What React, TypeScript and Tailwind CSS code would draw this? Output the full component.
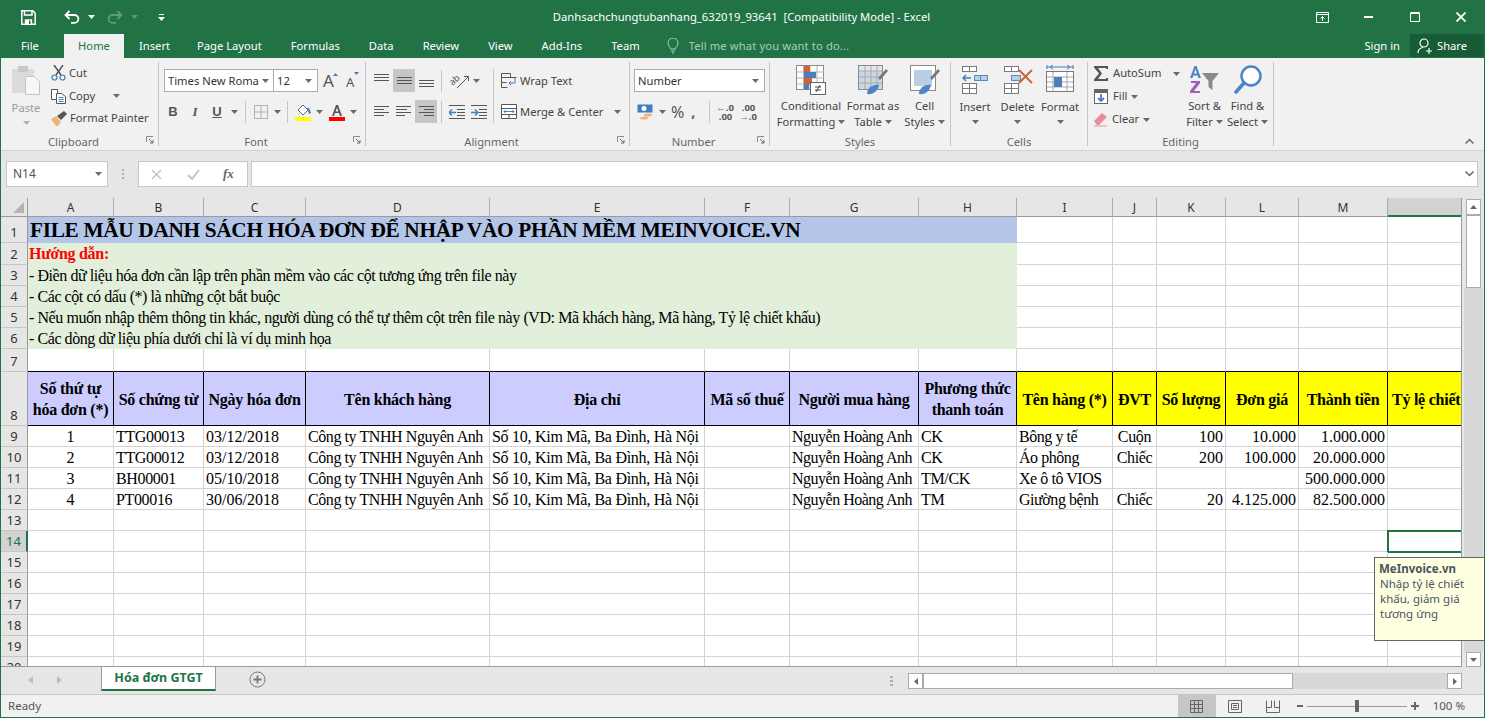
const serif = "font-['Liberation_Serif',serif]";

function Caret({ className = 'text-[#6b6b6b]' }: { className?: string }) {
  return (
    <svg width="7" height="4" viewBox="0 0 7 4" className={`shrink-0 ${className}`}>
      <path d="M0 0h7L3.5 4z" fill="currentColor" />
    </svg>
  );
}

function Launcher() {
  return (
    <svg width="8" height="8" viewBox="0 0 8 8" className="mr-[4px] mt-[6px] shrink-0" fill="none">
      <path d="M.5 6V.5H7" stroke="#8a8a8a" />
      <path d="M3 3l4 4M7 4v3H4" stroke="#6b6b6b" />
    </svg>
  );
}

function GroupLabel({ text, launcher = false }: { text: string; launcher?: boolean }) {
  return (
    <div className="flex h-[16px]">
      <div className="flex-1 text-center leading-[24px] text-[#666]">{text}</div>
      {launcher && <Launcher />}
    </div>
  );
}

function BigButton({ w, l1, l2, icon }: { w: string; l1: string; l2?: string; icon: React.ReactNode }) {
  return (
    <div className={`${w} flex flex-col items-center pt-[3px]`}>
      <div className="h-[32px] flex items-center justify-center">{icon}</div>
      <div className="mt-[3px] leading-[16px] h-[16px] whitespace-nowrap">{l1}</div>
      {l2 ? (
        <div className="leading-[16px] h-[16px] flex items-center gap-[3px] whitespace-nowrap">
          {l2}
          <Caret />
        </div>
      ) : (
        <div className="h-[16px] flex items-center">
          <Caret />
        </div>
      )}
    </div>
  );
}

function Lines({ rows }: { rows: [number, number][] }) {
  return (
    <svg width="15" height="15" viewBox="0 0 15 15" stroke="#555" fill="none">
      {rows.map(([y, w], i) => (
        <path key={i} d={`M${w < 0 ? 15 + w : 0} ${y + 0.5}h${Math.abs(w)}`} />
      ))}
    </svg>
  );
}

function Ribbon() {
  return (
    <div className="h-[93px] bg-[#f1f1f1] border-b border-[#d4d4d4] flex items-start pt-[4px] text-[11.2px] text-[#444] font-['Noto_Sans',sans-serif]">
      {/* Clipboard */}
      <div className="w-[158px] h-[84px] border-r border-[#c6c6c6] flex flex-col">
        <div className="h-[68px] flex">
          <div className="w-[50px] flex flex-col items-center pt-[3px]">
            <svg width="30" height="31" viewBox="0 0 30 31">
              <rect x="1" y="4" width="22" height="24" rx="1" fill="#dcdadb" />
              <rect x="7" y="1" width="10" height="6" fill="#c9c7c8" />
              <path d="M14.5 11.5h9l5 5v13h-14z" fill="#f7f7f7" stroke="#c4c4c4" />
            </svg>
            <div className="mt-[4px] leading-[16px] text-[#9a9a9a]">Paste</div>
            <div className="mt-[5px]"><Caret className="text-[#b0b0b0]" /></div>
          </div>
          <div className="flex flex-col">
            <div className="h-[23px] flex items-center gap-[3px]">
              <svg width="15" height="16" viewBox="0 0 15 16" fill="none" className="shrink-0">
                <path d="M3 0l7 10M12 0L5 10" stroke="#555" strokeWidth="1.5" />
                <circle cx="3.5" cy="12.5" r="2.5" stroke="#3f7fbf" strokeWidth="1.2" />
                <circle cx="11.5" cy="12.5" r="2.5" stroke="#3f7fbf" strokeWidth="1.2" />
              </svg>
              <span>Cut</span>
            </div>
            <div className="h-[23px] flex items-center gap-[3px]">
              <svg width="15" height="15" viewBox="0 0 15 15" fill="#fff" stroke="#555" className="shrink-0">
                <path d="M.5.5h6v10h-6z" />
                <path d="M5.5 4.5h5l4 3v7h-9z" />
                <path d="M7.5 8.5h5M7.5 10.5h5M7.5 12.5h5" stroke="#3f7fbf" />
              </svg>
              <span>Copy</span>
              <span className="ml-[15px]"><Caret /></span>
            </div>
            <div className="h-[23px] flex items-center gap-[3px]">
              <svg width="16" height="15" viewBox="0 0 16 15" className="shrink-0">
                <path d="M0 8l5-3 5 6-3 4H5z" fill="#e8b677" />
                <path d="M6 5l7-5 3 3-6 6z" fill="#555" />
              </svg>
              <span>Format Painter</span>
            </div>
          </div>
        </div>
        <GroupLabel text="Clipboard" launcher />
      </div>

      {/* Font */}
      <div className="w-[207px] h-[84px] border-r border-[#c6c6c6] flex flex-col">
        <div className="h-[68px] pt-[7px]">
          <div className="flex items-center h-[23px]">
            <div className="ml-[5px] w-[110px] h-[23px] bg-white border border-[#ababab] flex items-center pl-[3px] pr-[4px]">
              <span className="flex-1 truncate text-[#333] pt-[2px]">Times New Roma</span>
              <Caret />
            </div>
            <div className="w-[44px] h-[23px] bg-white border border-l-0 border-[#ababab] flex items-center pl-[3px] pr-[5px]">
              <span className="flex-1 text-[#333] pt-[2px]">12</span>
              <Caret />
            </div>
            <div className="ml-[5px] w-[16px] flex items-start">
              <span className="text-[17px] leading-[22px] text-[#555]">A</span>
              <svg width="5" height="3" viewBox="0 0 5 3" className="mt-[3px] -ml-[1px]"><path d="M0 3h5L2.5 0z" fill="#3f7fbf" /></svg>
            </div>
            <div className="ml-[7px] w-[14px] flex items-start">
              <span className="text-[13px] leading-[20px] text-[#555] mt-[3px]">A</span>
              <svg width="5" height="3" viewBox="0 0 5 3" className="mt-[3px]"><path d="M0 0h5L2.5 3z" fill="#3f7fbf" /></svg>
            </div>
          </div>
          <div className="flex items-center h-[23px] mt-[8px] ml-[3px] text-[13px] text-[#555]">
            <span className="w-[22px] text-center font-bold font-['Liberation_Sans',sans-serif]">B</span>
            <span className="w-[22px] text-center italic font-['Liberation_Serif',serif] font-bold">I</span>
            <span className="w-[22px] text-center underline font-bold font-['Liberation_Sans',sans-serif]">U</span>
            <span className="w-[12px] flex justify-center"><Caret /></span>
            <span className="ml-[5px] w-px h-[22px] bg-[#c6c6c6]" />
            <svg width="14" height="14" viewBox="0 0 14 14" className="ml-[8px]" fill="none" stroke="#777" strokeDasharray="1 1">
              <path d="M.5.5h13v13H.5zM.5 7h13M7 .5v13" />
            </svg>
            <span className="w-[19px] flex justify-center"><Caret /></span>
            <span className="w-px h-[22px] bg-[#c6c6c6]" />
            <svg width="16" height="18" viewBox="0 0 16 18" className="ml-[7px]">
              <path d="M3 7l5-5 5 5-5 5z" fill="#fff" stroke="#666" />
              <path d="M12 5h2l2 5-2 1z" fill="#3f7fbf" />
              <rect y="14" width="16" height="4" fill="#ffff00" />
            </svg>
            <span className="w-[16px] flex justify-center"><Caret /></span>
            <svg width="16" height="18" viewBox="0 0 16 18" className="ml-[2px]">
              <path d="M3 13L7 2h2l4 11h-2l-1-3H6l-1 3zM6.600 8.400h2.800L8 4.400z" fill="#555" />
              <rect y="14" width="16" height="4" fill="#ff0000" />
            </svg>
            <span className="w-[16px] flex justify-center"><Caret /></span>
          </div>
        </div>
        <GroupLabel text="Font" launcher />
      </div>

      {/* Alignment */}
      <div className="w-[264px] h-[84px] border-r border-[#c6c6c6] flex flex-col">
        <div className="h-[68px] pt-[7px] flex">
          <div className="w-[127px]">
            <div className="h-[23px] flex items-center pl-[8px]">
              <Lines rows={[[1, 15], [4, 15], [7, 15]]} />
              <span className="ml-[4px] w-[22px] h-[23px] bg-[#c6c6c6] flex items-center justify-center"><Lines rows={[[4, 15], [7, 15], [10, 15]]} /></span>
              <span className="ml-[4px] flex"><Lines rows={[[7, 15], [10, 15], [13, 15]]} /></span>
              <span className="ml-[7px] w-px h-[22px] bg-[#c6c6c6]" />
              <svg width="20" height="16" viewBox="0 0 20 16" className="ml-[8px]" fill="none">
                <text x="0" y="10" fontSize="9" fill="#555" stroke="none" transform="rotate(-42 5 8)">ab</text>
                <path d="M7 15L18 4M14 3.500h4.500V8" stroke="#555" />
              </svg>
              <span className="ml-[3px]"><Caret /></span>
            </div>
            <div className="h-[23px] mt-[8px] flex items-center pl-[8px]">
              <Lines rows={[[2, 15], [5, 10], [8, 15], [11, 10]]} />
              <span className="ml-[7px] flex"><Lines rows={[[2, 15], [11, 9], [5, 11], [8, 15]]} /></span>
              <span className="ml-[4px] w-[22px] h-[23px] bg-[#c6c6c6] flex items-center justify-center"><Lines rows={[[2, 15], [5, -10], [8, 15], [11, -10]]} /></span>
              <span className="ml-[4px] w-px h-[22px] bg-[#c6c6c6]" />
              <svg width="16" height="14" viewBox="0 0 16 14" className="ml-[7px]" fill="none">
                <path d="M0 .5h16M0 13.500h16M8 4.500h8M8 7.500h8M8 10.500h8" stroke="#555" />
                <path d="M0 7.500h7M3 4.500l-3 3 3 3" stroke="#3f7fbf" strokeWidth="1.400" />
              </svg>
              <svg width="16" height="14" viewBox="0 0 16 14" className="ml-[6px]" fill="none">
                <path d="M0 .5h16M0 13.500h16M8 4.500h8M8 7.500h8M8 10.500h8" stroke="#555" />
                <path d="M0 7.500h7M4 4.500l3 3-3 3" stroke="#3f7fbf" strokeWidth="1.400" />
              </svg>
            </div>
          </div>
          <span className="w-px h-[54px] bg-[#c6c6c6]" />
          <div className="pl-[7px]">
            <div className="h-[23px] flex items-center gap-[3px]">
              <svg width="16" height="15" viewBox="0 0 16 15" fill="none" stroke="#555">
                <path d="M.5.500h9v4h-9zM.5 4.500h15M.5 9.500h5M.5 14.500h6M.5 4.500v10" />
                <path d="M14 5v5H8M10 8l-2 2 2 2" stroke="#3f7fbf" />
              </svg>
              <span className="pt-[2px]">Wrap Text</span>
            </div>
            <div className="h-[23px] mt-[8px] flex items-center gap-[3px]">
              <svg width="16" height="15" viewBox="0 0 16 15" fill="#fff" stroke="#555">
                <path d="M.5.500h15v14H.5zM.5 4.500h15M.5 10.500h15M8 10.500v4" />
                <path d="M3 7.500h10M4.500 6L3 7.500 4.500 9M11.500 6L13 7.500 11.500 9" stroke="#3f7fbf" fill="none" />
              </svg>
              <span className="pt-[2px]">Merge &amp; Center</span>
              <span className="ml-[8px]"><Caret /></span>
            </div>
          </div>
        </div>
        <GroupLabel text="Alignment" launcher />
      </div>

      {/* Number */}
      <div className="w-[140px] h-[84px] border-r border-[#c6c6c6] flex flex-col">
        <div className="h-[68px] pt-[7px]">
          <div className="ml-[4px] w-[131px] h-[23px] bg-white border border-[#ababab] flex items-center pl-[3px] pr-[5px]">
            <span className="flex-1 text-[#333] pt-[2px]">Number</span>
            <Caret />
          </div>
          <div className="h-[23px] mt-[8px] flex items-center pl-[7px]">
            <svg width="16" height="16" viewBox="0 0 16 16">
              <rect x=".5" y=".5" width="15" height="8" fill="#3f7fbf" />
              <circle cx="7" cy="4.500" r="2.500" fill="#fff" />
              <ellipse cx="11" cy="11" rx="4" ry="1.500" fill="#e8b677" />
              <ellipse cx="7" cy="14" rx="4" ry="1.500" fill="#e8b677" />
            </svg>
            <span className="ml-[6px]"><Caret /></span>
            <span className="ml-[5px] text-[16px] leading-[20px] text-[#555]">%</span>
            <span className="ml-[7px] font-bold text-[#555] text-[14px] leading-[16px]">,</span>
            <span className="ml-[14px] w-px h-[22px] bg-[#c6c6c6]" />
            <div className="ml-[6px] w-[16px] text-[9.5px] leading-[9px] text-[#555] font-bold text-right">
              <div className="text-right"><span className="text-[#3f7fbf]">←</span>.0</div>
              <div>.00</div>
            </div>
            <div className="ml-[7px] w-[16px] text-[9.5px] leading-[9px] text-[#555] font-bold text-right">
              <div>.00</div>
              <div><span className="text-[#3f7fbf]">→</span>.0</div>
            </div>
          </div>
        </div>
        <GroupLabel text="Number" launcher />
      </div>

      {/* Styles */}
      <div className="w-[181px] h-[84px] border-r border-[#c6c6c6] flex flex-col">
        <div className="h-[68px] flex pl-[6px]">
          <BigButton
            w="w-[70px]"
            l1="Conditional"
            l2="Formatting"
            icon={
              <svg width="30" height="30" viewBox="0 0 30 30">
                <rect x=".5" y=".5" width="27" height="24" fill="#fff" stroke="#8a8a8a" />
                <path d="M7.500 1v24M14 1v24M21 1v24M1 7h27M1 13h27M1 19h27" stroke="#b5b5b5" />
                <rect x="8" y="1" width="6" height="6" fill="#d2603a" />
                <rect x="8" y="7" width="12" height="6" fill="#4a7fb8" />
                <rect x="8" y="13" width="8" height="6" fill="#d2603a" />
                <rect x="8" y="19" width="5" height="6" fill="#4a7fb8" />
                <rect x="14.500" y="17.500" width="15" height="12" fill="#fff" stroke="#666" />
                <path d="M19 22h6M19 25h6M24 20l-4 7" stroke="#444" fill="none" />
              </svg>
            }
          />
          <BigButton
            w="w-[54px]"
            l1="Format as"
            l2="Table"
            icon={
              <svg width="30" height="30" viewBox="0 0 30 30">
                <rect x=".5" y=".5" width="24" height="24" fill="#c9d6e6" stroke="#8a8a8a" />
                <rect x="1" y="1" width="23" height="5" fill="#e6e6e6" />
                <path d="M7 1v23M13 1v23M19 1v23M1 6h23M1 12h23M1 18h23" stroke="#a9a9a9" />
                <path d="M20 13l8-9 2 2-8 9z" fill="#777" />
                <path d="M9 29c0-6 6-10 12-9-1 6-6 10-12 9z" fill="#4a86c5" />
              </svg>
            }
          />
          <BigButton
            w="w-[49px]"
            l1="Cell"
            l2="Styles"
            icon={
              <svg width="30" height="30" viewBox="0 0 30 30">
                <rect x=".5" y=".5" width="25" height="25" fill="#fff" stroke="#8a8a8a" />
                <rect x="4" y="5" width="18" height="16" fill="#b9cfe6" />
                <path d="M20 13l8-9 2 2-8 9z" fill="#777" />
                <path d="M9 29c0-6 6-10 12-9-1 6-6 10-12 9z" fill="#4a86c5" />
              </svg>
            }
          />
        </div>
        <GroupLabel text="Styles" />
      </div>

      {/* Cells */}
      <div className="w-[137px] h-[84px] border-r border-[#c6c6c6] flex flex-col">
        <div className="h-[68px] flex pl-[3px]">
          <BigButton
            w="w-[42px]"
            l1="Insert"
            icon={
              <svg width="26" height="28" viewBox="0 0 26 28">
                <g stroke="#7a7a7a" fill="#fff">
                  <rect x=".5" y=".5" width="7" height="5" />
                  <rect x="7.500" y=".5" width="7" height="5" />
                  <rect x=".5" y="17.500" width="7" height="5" />
                  <rect x="7.500" y="17.500" width="7" height="5" />
                  <rect x=".5" y="22.500" width="7" height="5" />
                  <rect x="7.500" y="22.500" width="7" height="5" />
                  <rect x="12.500" y="9.500" width="6" height="5" fill="#b9cfe6" stroke="#5a8cc0" />
                  <rect x="18.500" y="9.500" width="7" height="5" fill="#b9cfe6" stroke="#5a8cc0" />
                </g>
                <path d="M1 12h8M4 9l-3 3 3 3" stroke="#3f7fbf" strokeWidth="1.500" fill="none" />
              </svg>
            }
          />
          <BigButton
            w="w-[43px]"
            l1="Delete"
            icon={
              <svg width="30" height="28" viewBox="0 0 30 28">
                <g stroke="#7a7a7a" fill="#fff">
                  <rect x="1.500" y=".5" width="7" height="5" />
                  <rect x="8.500" y=".5" width="7" height="5" />
                  <rect x="1.500" y="17.500" width="7" height="5" />
                  <rect x="8.500" y="17.500" width="7" height="5" />
                  <rect x="1.500" y="22.500" width="7" height="5" />
                  <rect x="8.500" y="22.500" width="7" height="5" />
                  <rect x="8.500" y="9.500" width="9" height="5" fill="#b9cfe6" stroke="#5a8cc0" />
                </g>
                <path d="M16 4l13 13M29 4L16 17" stroke="#d2603a" strokeWidth="2" />
              </svg>
            }
          />
          <BigButton
            w="w-[42px]"
            l1="Format"
            icon={
              <svg width="28" height="30" viewBox="0 0 28 30">
                <path d="M1 2h26M1 0v4M27 0v4M4 2l3-2M4 2l3 2M24 2l-3-2M24 2l-3 2" stroke="#3f7fbf" fill="none" />
                <rect x=".5" y="6.500" width="27" height="20" fill="#fff" stroke="#7a7a7a" />
                <path d="M7 7v19M21 7v19M1 12h26M1 17h26M1 22h26" stroke="#aaa" />
                <rect x="8" y="12" width="8" height="10" fill="#4a7fb8" />
              </svg>
            }
          />
        </div>
        <GroupLabel text="Cells" />
      </div>

      {/* Editing */}
      <div className="w-[186px] h-[84px] border-r border-[#c6c6c6] flex flex-col">
        <div className="h-[68px] flex">
          <div className="w-[95px] pl-[6px]">
            <div className="h-[23px] flex items-center gap-[4px]">
              <svg width="15" height="15" viewBox="0 0 15 15" className="shrink-0">
                <path d="M0 0h14v3h-2V2H4l4 5.500L4 13h8v-1h2v3H0v-1.500L5 7.500 0 1.500z" fill="#555" />
              </svg>
              <span>AutoSum</span>
              <span className="ml-[8px]"><Caret /></span>
            </div>
            <div className="h-[23px] flex items-center gap-[4px]">
              <svg width="15" height="15" viewBox="0 0 15 15" fill="none" className="shrink-0">
                <rect x=".5" y=".5" width="13" height="14" fill="#fff" stroke="#666" />
                <rect x="1" y="1" width="12" height="3" fill="#666" />
                <path d="M7 5v7M4 9l3 3 3-3" stroke="#3f7fbf" strokeWidth="1.800" />
              </svg>
              <span>Fill</span>
              <Caret />
            </div>
            <div className="h-[23px] flex items-center gap-[4px]">
              <svg width="14" height="14" viewBox="0 0 14 14" className="shrink-0">
                <path d="M0 8l8-8 5 4-8 8H3z" fill="#e98b9c" />
                <path d="M0 13h13" stroke="#e98b9c" />
              </svg>
              <span>Clear</span>
              <Caret />
            </div>
          </div>
          <BigButton
            w="w-[43px]"
            l1="Sort &"
            l2="Filter"
            icon={
              <svg width="30" height="30" viewBox="0 0 30 30">
                <path d="M0 13L4.500 1h2L11 13H8.500l-.8-2.500H3.300L2.500 13zM4 8.500h3L5.500 4z" fill="#4a86c5" />
                <path d="M1 16h9v2l-6 8h6v2H0v-2l6-8H1z" fill="#9a63b5" />
                <path d="M12 8h17l-6.500 8v9l-4-3v-6z" fill="#8a8a8a" />
              </svg>
            }
          />
          <BigButton
            w="w-[43px]"
            l1="Find &"
            l2="Select"
            icon={
              <svg width="28" height="30" viewBox="0 0 28 30" fill="none">
                <circle cx="17" cy="11" r="9.500" fill="#fff" stroke="#4a86c5" strokeWidth="2.500" />
                <path d="M2 27l8-9" stroke="#4a86c5" strokeWidth="3.500" strokeLinecap="round" />
              </svg>
            }
          />
        </div>
        <GroupLabel text="Editing" />
      </div>

      <div className="flex-1 h-[84px] flex items-end justify-end pr-[10px] pb-[2px]">
        <svg width="9" height="6" viewBox="0 0 9 6" fill="none" stroke="#666" strokeWidth="1.500">
          <path d="M.5 5.500L4.500 1.500l4 4" />
        </svg>
      </div>
    </div>
  );
}

function TitleBar() {
  return (
    <div className="h-[34px] bg-[#217346] flex items-center text-white text-[11.25px] font-['Noto_Sans',sans-serif]">
      <div className="flex-1 flex items-center pl-[20px]">
        <svg width="15" height="15" viewBox="0 0 15 15" fill="none" stroke="#fff" strokeWidth="1.500">
          <path d="M.8.800h11l2.400 2.400v11H.8z" />
          <path d="M3.500 1v4h7.500V1" />
          <rect x="3.800" y="9.300" width="7.400" height="5" fill="#fff" stroke="none" />
          <rect x="8" y="10.500" width="1.500" height="3.500" fill="#217346" stroke="none" />
        </svg>
        <svg width="16" height="14" viewBox="0 0 16 14" className="ml-[28px]" fill="none" stroke="#fff" strokeWidth="1.800">
          <path d="M5.500 1L1.500 5l4 4M1.500 5h9a3.800 3.800 0 0 1 0 7.800H7" />
        </svg>
        <span className="ml-[8px]"><Caret className="text-white" /></span>
        <svg width="16" height="14" viewBox="0 0 16 14" className="ml-[12px]" fill="none" stroke="#5f9a7c" strokeWidth="1.800">
          <path d="M10.500 1l4 4-4 4M14.500 5h-9a3.800 3.800 0 0 0 0 7.800H9" />
        </svg>
        <span className="ml-[8px]"><Caret className="text-[#5f9a7c]" /></span>
        <svg width="7" height="7" viewBox="0 0 7 7" className="ml-[20px]" fill="#fff">
          <rect x="1" width="5" height="1" />
          <path d="M0 3h7L3.500 7z" />
        </svg>
      </div>
      <div className="whitespace-pre mr-[22px]">Danhsachchungtubanhang_632019_93641  [Compatibility Mode] - Excel</div>
      <div className="flex-1 flex items-center justify-end">
        <svg width="13" height="11" viewBox="0 0 13 11" fill="none" stroke="#fff">
          <path d="M.5.500h12v10H.5zM.5 2.500h12M6.500 9V4.500M4.500 6.500l2-2 2 2" />
        </svg>
        <svg width="9" height="2" viewBox="0 0 9 2" className="ml-[35px]"><rect width="9" height="2" fill="#fff" /></svg>
        <svg width="10" height="10" viewBox="0 0 10 10" className="ml-[37px]" fill="none" stroke="#fff">
          <path d="M.5 1.200h9v8.300h-9z" />
          <path d="M.5 1h9" strokeWidth="2" />
        </svg>
        <svg width="10" height="10" viewBox="0 0 10 10" className="ml-[36px] mr-[18px]" fill="none" stroke="#fff" strokeWidth="1.800">
          <path d="M.5.500l9 9M9.500.500l-9 9" />
        </svg>
      </div>
    </div>
  );
}

function TabRow() {
  return (
    <div className="h-[24px] bg-[#217346] flex text-white text-[11.2px] font-['Noto_Sans',sans-serif] leading-[24px]">
      <span className="ml-[20px] w-[43px]">File</span>
      <span className="w-[60px] bg-[#f1f1f1] text-[#217346] text-center">Home</span>
      <div className="ml-[15px] flex gap-[29px]">
        <span className="-mr-[2px]">Insert</span>
        <span>Page Layout</span>
        <span>Formulas</span>
        <span>Data</span>
        <span>Review</span>
        <span>View</span>
        <span>Add-Ins</span>
        <span>Team</span>
      </div>
      <svg width="12" height="16" viewBox="0 0 12 16" className="ml-[27px] mt-[4px]" fill="none" stroke="#a9cdb9">
        <path d="M3.500 11c0-2-2.500-3-2.500-6a5 5 0 0 1 10 0c0 3-2.500 4-2.500 6zM4 13h4M5 15h2" />
      </svg>
      <span className="ml-[10px] text-[#a9cdb9] tracking-[0.13px]">Tell me what you want to do...</span>
      <div className="flex-1" />
      <span className="mr-[10px]">Sign in</span>
      <div className="w-[74px] h-[23px] bg-[#185c37] flex items-center pl-[7px] gap-[4px]">
        <svg width="16" height="16" viewBox="0 0 16 16" fill="none" stroke="#fff" strokeWidth="1.200">
          <circle cx="7" cy="5" r="4" />
          <path d="M1 15c0-3 2-5 5-5.500M12 10v6M9 13h6" />
        </svg>
        <span>Share</span>
      </div>
    </div>
  );
}

function FormulaBar() {
  return (
    <div className="h-[47px] bg-[#e6e6e6] flex items-start pt-[10px] font-['Noto_Sans',sans-serif] text-[12px]">
      <div className="ml-[5px] w-[102px] h-[26px] bg-white border border-[#c6c6c6] flex items-center pl-[6px] pr-[5px] text-[#555]">
        <span className="flex-1">N14</span>
        <Caret />
      </div>
      <svg width="3" height="11" viewBox="0 0 3 11" className="ml-[14px] mt-[8px]" fill="#b0b0b0">
        <rect width="2" height="2" /><rect y="4" width="2" height="2" /><rect y="8" width="2" height="2" />
      </svg>
      <div className="ml-[13px] w-[110px] h-[26px] bg-white border border-[#c6c6c6] flex items-center pl-[12px]">
        <svg width="11" height="11" viewBox="0 0 11 11" stroke="#c4c4c4" strokeWidth="1.500"><path d="M1 1l9 9M10 1l-9 9" /></svg>
        <svg width="13" height="11" viewBox="0 0 13 11" className="ml-[25px]" fill="none" stroke="#c4c4c4" strokeWidth="2"><path d="M1 6l4 4 7-9" /></svg>
        <span className="ml-[23px] font-['Liberation_Serif',serif] italic font-bold text-[#666] text-[13px]">fx</span>
      </div>
      <div className="ml-[3px] w-[1227px] h-[26px] bg-white border border-[#c6c6c6] flex items-center justify-end pr-[3px]">
        <svg width="9" height="6" viewBox="0 0 9 6" fill="none" stroke="#666" strokeWidth="1.500"><path d="M.5.500l4 4 4-4" /></svg>
      </div>
    </div>
  );
}

const columns = ['A', 'B', 'C', 'D', 'E', 'F', 'G', 'H', 'I', 'J', 'K', 'L', 'M', ''];
const headers = [
  'Số thứ tự\nhóa đơn (*)', 'Số chứng từ', 'Ngày hóa đơn', 'Tên khách hàng', 'Địa chỉ', 'Mã số thuế',
  'Người mua hàng', 'Phương thức\nthanh toán', 'Tên hàng (*)', 'ĐVT', 'Số lượng', 'Đơn giá', 'Thành tiền',
  'Tỷ lệ chiết khấu (%)',
];
const aligns = [
  'text-center', 'text-left tracking-[-0.35px]', 'text-left', 'text-left tracking-[-0.42px]', 'text-left tracking-[-0.28px]', 'text-left',
  'text-left tracking-[-0.5px]', 'text-left tracking-[-0.35px]', 'text-left tracking-[-0.45px]', 'text-center tracking-[-0.35px]',
  'text-right', 'text-right', 'text-right', 'text-right',
];
const customer = 'Công ty TNHH Nguyên Anh';
const address = 'Số 10, Kim Mã, Ba Đình, Hà Nội';
const buyer = 'Nguyễn Hoàng Anh';
const dataRows = [
  ['1', 'TTG00013', '03/12/2018', customer, address, '', buyer, 'CK', 'Bông y tế', 'Cuộn', '100', '10.000', '1.000.000', ''],
  ['2', 'TTG00012', '03/12/2018', customer, address, '', buyer, 'CK', 'Áo phông', 'Chiếc', '200', '100.000', '20.000.000', ''],
  ['3', 'BH00001', '05/10/2018', customer, address, '', buyer, 'TM/CK', 'Xe ô tô VIOS', '', '', '', '500.000.000', ''],
  ['4', 'PT00016', '30/06/2018', customer, address, '', buyer, 'TM', 'Giường bệnh', 'Chiếc', '20', '4.125.000', '82.500.000', ''],
];
const instructions = [
  '- Điền dữ liệu hóa đơn cần lập trên phần mềm vào các cột tương ứng trên file này',
  '- Các cột có dấu (*) là những cột bắt buộc',
  '- Nếu muốn nhập thêm thông tin khác, người dùng có thể tự thêm cột trên file này (VD: Mã khách hàng, Mã hàng, Tỷ lệ chiết khấu)',
  '- Các dòng dữ liệu phía dưới chỉ là ví dụ minh họa',
];

const gridCell = 'border-r border-b border-[#d4d4d4] overflow-hidden whitespace-nowrap px-[2px] pt-[1px] leading-[20px]';

function RowHead({ n, active = false }: { n: number; active?: boolean }) {
  return (
    <div
      className={`flex items-end justify-center font-['Noto_Sans',sans-serif] text-[13px] leading-[20px] border-b border-[#c6c6c6] ${
        active ? 'bg-[#d2d2d2] text-[#217346] border-r-2 border-r-[#217346]' : 'bg-[#e6e6e6] text-[#333] border-r border-r-[#9b9b9b]'
      }`}
    >
      {n}
    </div>
  );
}

function BlankTail({ row, from }: { row: number; from: number }) {
  return (
    <>
      {columns.slice(from).map((c, i) => (
        <div key={`${row}-${c}-${i}`} className={gridCell} />
      ))}
    </>
  );
}

function Sheet() {
  const emptyRows = [13, 14, 15, 16, 17, 18, 19, 20];
  return (
    <div className="h-[469px] flex bg-[#e6e6e6]">
      <div className="w-[1461px] border-b border-r border-[#9b9b9b] overflow-hidden bg-white">
        <div className={`grid grid-cols-[27px_86px_90px_102px_184px_215px_85px_129px_98px_96px_44px_69px_73px_89px_160px] grid-rows-[19px_26px_22px_21px_21px_21px_21px_23px_54px_repeat(12,21px)] w-max text-[16px] text-black ${serif}`}>
          {/* column letters */}
          <div className="bg-[#e6e6e6] border-r border-b border-[#9b9b9b] flex items-end justify-end pr-[3px] pb-[3px]">
            <svg width="11" height="11" viewBox="0 0 11 11"><path d="M11 0v11H0z" fill="#b4b4b4" /></svg>
          </div>
          {columns.map((c, i) =>
            c ? (
              <div key={i} className="bg-[#e6e6e6] border-r border-b border-r-[#ababab] border-b-[#9b9b9b] flex items-start pt-[1px] justify-center font-['Noto_Sans',sans-serif] text-[12px] leading-[18px] text-[#333]">
                {c}
              </div>
            ) : (
              <div key={i} className="bg-[#d2d2d2] border-b-2 border-[#217346]" />
            ),
          )}

          {/* rows 1 to 6 */}
          <RowHead n={1} />
          <div className="col-span-8 bg-[#b4c6e7] font-bold text-[21.3px] tracking-[-0.32px] leading-[27px] pl-[2px] whitespace-nowrap">
            FILE MẪU DANH SÁCH HÓA ĐƠN ĐỂ NHẬP VÀO PHẦN MỀM MEINVOICE.VN
          </div>
          <BlankTail row={1} from={8} />
          <RowHead n={2} />
          <div className="col-span-8 bg-[#e2efda] font-bold text-[#ff0000] px-[1px] leading-[22px] tracking-[-0.3px]">Hướng dẫn:</div>
          <BlankTail row={2} from={8} />
          {instructions.map((t, i) => (
            <div key={i} className="contents">
              <RowHead n={i + 3} />
              <div className="col-span-8 bg-[#e2efda] px-[1px] leading-[21px] whitespace-nowrap tracking-[-0.43px]">{t}</div>
              <BlankTail row={i + 3} from={8} />
            </div>
          ))}

          {/* row 7 */}
          <RowHead n={7} />
          {columns.map((c, i) => (
            <div key={i} className="border-r border-[#d4d4d4] border-b border-b-black" />
          ))}

          {/* header row */}
          <RowHead n={8} />
          {headers.map((h, i) => (
            <div
              key={i}
              className={`border-r border-b border-black flex items-center pt-[1px] font-bold leading-[21px] tracking-[-0.25px] whitespace-pre text-center overflow-hidden ${
                i < 8 ? 'bg-[#ccccff]' : 'bg-[#ffff00]'
              } ${i === 13 ? 'justify-start pl-[4px]' : 'justify-center'}`}
            >
              {h}
            </div>
          ))}

          {/* data */}
          {dataRows.map((row, r) => (
            <div key={r} className="contents">
              <RowHead n={r + 9} />
              {row.map((v, i) => (
                <div key={i} className={`${gridCell} ${aligns[i]}`}>
                  {v}
                </div>
              ))}
            </div>
          ))}

          {/* empty rows */}
          {emptyRows.map((n) => (
            <div key={n} className="contents">
              <RowHead n={n} active={n === 14} />
              {columns.map((c, i) => (
                <div
                  key={i}
                  className={n === 14 && i === 13 ? 'outline-2 -outline-offset-1 outline-[#217346]' : gridCell}
                />
              ))}
            </div>
          ))}
        </div>
      </div>

      {/* vertical scrollbar */}
      <div className="w-[22px] flex flex-col items-center">
        <div className="h-[16px] w-[15px] mt-[1px] bg-white border border-[#ababab] flex items-center justify-center">
          <svg width="7" height="4" viewBox="0 0 7 4"><path d="M0 4h7L3.500 0z" fill="#666" /></svg>
        </div>
        <div className="h-[73px] w-[15px] bg-white border border-[#ababab]" />
        <div className="flex-1 w-[19px] bg-[#d8d8d8]" />
        <div className="h-[15px] w-[15px] bg-white border border-[#ababab] flex items-center justify-center">
          <svg width="7" height="4" viewBox="0 0 7 4"><path d="M0 0h7L3.500 4z" fill="#666" /></svg>
        </div>
      </div>
    </div>
  );
}

function SheetTabs() {
  return (
    <div className="h-[28px] bg-[#e6e6e6] border-b border-[#c6c6c6] flex items-start font-['Noto_Sans',sans-serif]">
      <svg width="5" height="8" viewBox="0 0 5 8" className="ml-[27px] mt-[9px]"><path d="M5 0v8L0 4z" fill="#bdbdbd" /></svg>
      <svg width="5" height="8" viewBox="0 0 5 8" className="ml-[24px] mt-[9px]"><path d="M0 0v8l5-4z" fill="#bdbdbd" /></svg>
      <div className="ml-[39px] w-[115px] h-[24px] bg-white border-x border-[#9b9b9b] border-b-2 border-b-[#217346] flex items-center justify-center font-bold text-[12.5px] text-[#217346]">
        Hóa đơn GTGT
      </div>
      <svg width="17" height="17" viewBox="0 0 17 17" className="ml-[33px] mt-[4px]" fill="none" stroke="#777">
        <circle cx="8.500" cy="8.500" r="7.500" />
        <path d="M8.500 4.500v8M4.500 8.500h8" strokeWidth="1.800" />
      </svg>
      <svg width="3" height="11" viewBox="0 0 3 11" className="ml-[624px] mt-[9px]" fill="#b0b0b0">
        <rect width="3" height="2" /><rect y="4" width="3" height="2" /><rect y="8" width="3" height="2" />
      </svg>
      <div className="ml-[15px] mt-[6px] w-[554px] h-[16px] flex bg-[#d8d8d8]">
        <div className="w-[15px] bg-white border border-[#ababab] flex items-center justify-center">
          <svg width="4" height="7" viewBox="0 0 4 7"><path d="M4 0v7L0 3.500z" fill="#666" /></svg>
        </div>
        <div className="w-[370px] bg-white border border-[#ababab]" />
        <div className="flex-1" />
        <div className="w-[15px] bg-white border border-[#ababab] flex items-center justify-center">
          <svg width="4" height="7" viewBox="0 0 4 7"><path d="M0 0v7l4-3.500z" fill="#666" /></svg>
        </div>
      </div>
    </div>
  );
}

function StatusBar() {
  return (
    <div className="h-[22px] bg-[#f1f1f1] flex items-center font-['Noto_Sans',sans-serif] text-[11.5px] text-[#555]">
      <span className="ml-[7px]">Ready</span>
      <div className="flex-1" />
      <div className="w-[38px] h-[22px] bg-[#c6c6c6] flex items-center justify-center">
        <svg width="13" height="13" viewBox="0 0 13 13" fill="none" stroke="#666">
          <path d="M.5.500h12v12H.5zM4.500.5v12M8.500.5v12M.5 4.500h12M.5 8.500h12" />
        </svg>
      </div>
      <svg width="14" height="13" viewBox="0 0 14 13" fill="none" stroke="#666" className="ml-[12px]">
        <path d="M.5.500h13v12H.5z" />
        <path d="M3.500 3.500h7v6h-7zM5 5.500h4M5 7.500h4" />
      </svg>
      <svg width="14" height="13" viewBox="0 0 14 13" fill="none" stroke="#666" className="ml-[24px]">
        <path d="M.5.500v12h13V.5M.5 7.500h5M5.500.5v7M8.500.5v7h5" />
      </svg>
      <span className="ml-[17px] w-[6px] h-[2px] bg-[#666]" />
      <div className="ml-[4px] w-[100px] h-px bg-[#9b9b9b] flex items-center">
        <span className="ml-[48px] w-[4px] h-[12px] bg-[#666]" />
      </div>
      <svg width="8" height="8" viewBox="0 0 8 8" className="ml-[4px]" stroke="#666" strokeWidth="2"><path d="M4 0v8M0 4h8" /></svg>
      <span className="ml-[14px] mr-[19px]">100 %</span>
    </div>
  );
}

function Tooltip() {
  return (
    <div className="absolute left-[1373px] top-[557px] w-[111px] h-[84px] bg-[#ffffe1] border border-[#666] pl-[4px] pt-[3px] font-['Noto_Sans',sans-serif] text-[11.5px] leading-[15px] text-[#4a5560]">
      <div className="font-bold">MeInvoice.vn</div>
      <div className="pl-[1px] w-[100px]">Nhập tỷ lệ chiết khấu, giảm giá tương ứng</div>
    </div>
  );
}

export default function App() {
  return (
    <div className="relative w-[1485px] h-[718px] overflow-hidden bg-[#e6e6e6] border-x border-b border-[#217346]">
      <TitleBar />
      <TabRow />
      <Ribbon />
      <FormulaBar />
      <Sheet />
      <SheetTabs />
      <StatusBar />
      <Tooltip />
    </div>
  );
}
